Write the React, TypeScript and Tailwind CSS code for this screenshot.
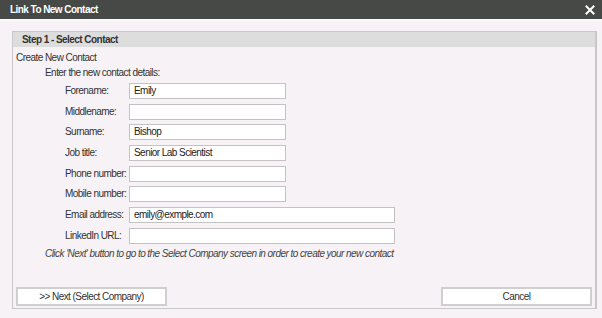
import React from "react";

const fields = [
  { label: "Forename:", value: "Emily", wide: false },
  { label: "Middlename:", value: "", wide: false },
  { label: "Surname:", value: "Bishop", wide: false },
  { label: "Job title:", value: "Senior Lab Scientist", wide: false },
  { label: "Phone number:", value: "", wide: false },
  { label: "Mobile number:", value: "", wide: false },
  { label: "Email address:", value: "emily@exmple.com", wide: true },
  { label: "LinkedIn URL:", value: "", wide: true },
];

export default function App() {
  return (
    <div className="w-[602px] h-[318px] bg-[#f6f2f6] text-[10px] leading-[14px] tracking-[-0.55px] text-[#333] font-['Liberation_Sans',Arial,sans-serif] flex flex-col overflow-hidden">
      {/* title bar */}
      <div className="h-[21px] shrink-0 bg-[#474946] flex items-center justify-between pl-[10px] pr-[7px] border-b-2 border-[#fbfafb]">
        <span className="font-bold text-white">Link To New Contact</span>
        <svg width="10" height="10" viewBox="0 0 10 10" className="text-white">
          <path d="M1.5 1.5 L8.5 8.5 M8.5 1.5 L1.5 8.5" stroke="currentColor" strokeWidth="2" strokeLinecap="square" />
        </svg>
      </div>

      {/* group box */}
      <div className="ml-[12px] mr-[5px] mt-[10px] h-[278px] border border-[#c8c8c8] border-r-2 flex flex-col">
        <div className="h-[15px] shrink-0 bg-[#dddddd] pl-[9px] font-bold text-[#333] flex items-center">
          Step 1 - Select Contact
        </div>

        <div className="pl-[3px] mt-[4px]">Create New Contact</div>
        <div className="pl-[32px] mt-[1px]">Enter the new contact details:</div>

        <div className="flex flex-col gap-[4.7px] mt-[3px]">
          {fields.map((f) => (
            <div key={f.label} className="flex items-center h-[16px] pl-[52px]">
              <span className="w-[64px] shrink-0 whitespace-nowrap">{f.label}</span>
              <div
                className={`h-[16px] shrink-0 border border-[#c3c3c3] bg-white flex items-center pl-[4px] text-[#222] ${
                  f.wide ? "w-[266px]" : "w-[157px]"
                }`}
              >
                {f.value}
              </div>
            </div>
          ))}
        </div>

        <div className="pl-[32px] mt-[3px] italic text-[#444]">
          Click 'Next' button to go to the Select Company screen in order to create your new contact
        </div>

        <div className="mt-auto mb-[2px] px-[3px] flex justify-between">
          <button className="w-[151px] h-[19px] bg-white border-2 border-[#cfcfcf] text-[#333] flex items-center justify-center">
            &gt;&gt; Next (Select Company)
          </button>
          <button className="w-[151px] h-[19px] bg-white border-2 border-[#cfcfcf] text-[#333] flex items-center justify-center">
            Cancel
          </button>
        </div>
      </div>
    </div>
  );
}
